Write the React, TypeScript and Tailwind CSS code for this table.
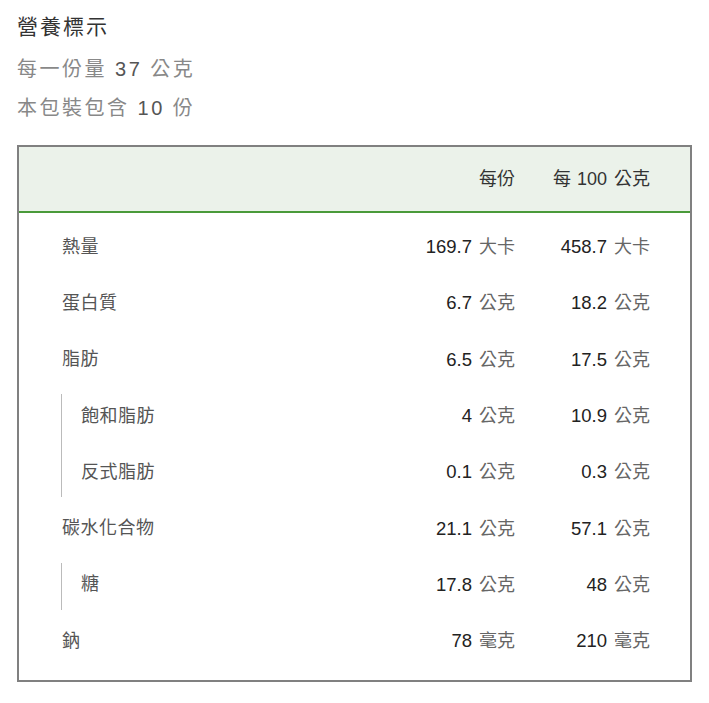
const rows: { label: string; serving: [string, string]; per100: [string, string]; sub?: boolean }[] = [
  { label: '熱量', serving: ['169.7', '大卡'], per100: ['458.7', '大卡'] },
  { label: '蛋白質', serving: ['6.7', '公克'], per100: ['18.2', '公克'] },
  { label: '脂肪', serving: ['6.5', '公克'], per100: ['17.5', '公克'] },
  { label: '飽和脂肪', serving: ['4', '公克'], per100: ['10.9', '公克'], sub: true },
  { label: '反式脂肪', serving: ['0.1', '公克'], per100: ['0.3', '公克'], sub: true },
  { label: '碳水化合物', serving: ['21.1', '公克'], per100: ['57.1', '公克'] },
  { label: '糖', serving: ['17.8', '公克'], per100: ['48', '公克'], sub: true },
  { label: '鈉', serving: ['78', '毫克'], per100: ['210', '毫克'] },
];

function Value({ v }: { v: [string, string] }) {
  return (
    <span>
      <span className="text-[#222] text-[18.5px]">{v[0]}</span>
      <span className="ml-[7px] text-[#666]">{v[1]}</span>
    </span>
  );
}

function Row({ label, serving, per100, sub }: { label: string; serving: [string, string]; per100: [string, string]; sub?: boolean }) {
  return (
    <div className="flex items-center h-[56.3px]">
      <div className={`flex-1 text-[#555] tracking-[0.5px] ${sub ? 'pl-[19px]' : 'pl-[43px]'}`}>{label}</div>
      <div className="w-[160px] text-right">
        <Value v={serving} />
      </div>
      <div className="w-[175px] pr-[40px] text-right">
        <Value v={per100} />
      </div>
    </div>
  );
}

export default function App() {
  const groups: (typeof rows)[] = [];
  rows.forEach((r) => {
    const last = groups[groups.length - 1];
    if (last && !!last[0].sub === !!r.sub) last.push(r);
    else groups.push([r]);
  });

  return (
    <div className="bg-white min-h-screen px-[17px] pt-[13px]" style={{ fontFamily: '"Liberation Sans", "Noto Sans CJK TC", sans-serif' }}>
      <div className="text-[21px] leading-[28px] text-[#333] tracking-[2px]">營養標示</div>
      <div className="mt-[14px] text-[20px] leading-[28px] text-[#888] tracking-[2.5px]">
        每一份量 <span className="text-[#555]">37</span> 公克
      </div>
      <div className="mt-[11px] text-[20px] leading-[28px] text-[#888] tracking-[2.5px]">
        本包裝包含 <span className="text-[#555]">10</span> 份
      </div>

      <div className="mt-[23px] border-2 border-[#808080] text-[18px]">
        <div className="flex items-center h-[66px] bg-[#ebf2ea] border-b-2 border-[#4a9a3a] text-[#333]">
          <div className="flex-1" />
          <div className="w-[160px] text-right">每份</div>
          <div className="w-[175px] pr-[40px] text-right">
            每<span className="ml-[6px]">100</span>
            <span className="ml-[7px]">公克</span>
          </div>
        </div>
        <div className="pt-[6px] pb-[11px]">
          {groups.map((g, i) =>
            g[0].sub ? (
              <div key={i} className="flex flex-col pl-[42px]">
                <div className="flex flex-col border-l border-[#bbb] mt-[6px] mb-[3px]">
                  <div className="-mt-[6px] -mb-[3px]">
                    {g.map((r) => (
                      <Row key={r.label} {...r} />
                    ))}
                  </div>
                </div>
              </div>
            ) : (
              g.map((r) => <Row key={r.label} {...r} />)
            )
          )}
        </div>
      </div>
    </div>
  );
}
